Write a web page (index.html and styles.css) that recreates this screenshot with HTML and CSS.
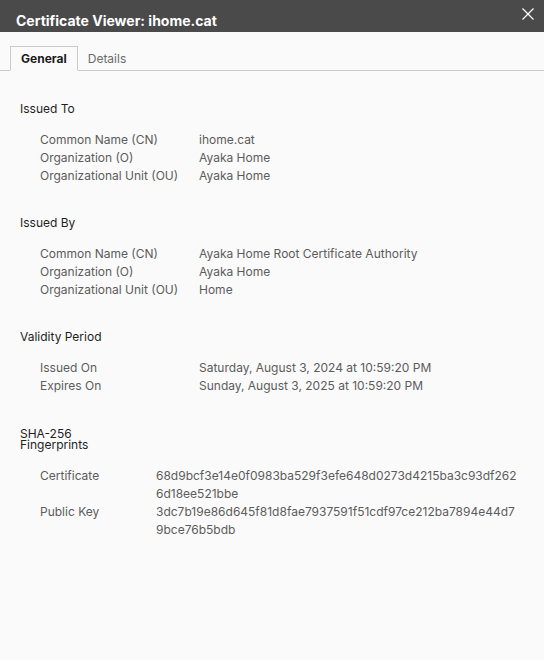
FILE: index.html
```html
<!DOCTYPE html>
<html>
<head>
<meta charset="utf-8">
<link rel="stylesheet" href="styles.css">
</head>
<body>
<div class="titlebar">
  <div class="title">Certificate Viewer: ihome.cat</div>
  <svg class="close" width="12" height="12" viewBox="0 0 12 12"><path d="M0.5 0.5 L11.5 11.5 M11.5 0.5 L0.5 11.5" stroke="#fff" stroke-width="1.2" fill="none"/></svg>
</div>
<div class="tabs">
  <div class="tab active">General</div>
  <div class="tab">Details</div>
</div>
<div class="content">
  <section class="section">
    <div class="heading">Issued To</div>
    <div class="rows">
      <div class="label">Common Name (CN)</div><div class="value">ihome.cat</div>
      <div class="label">Organization (O)</div><div class="value">Ayaka Home</div>
      <div class="label">Organizational Unit (OU)</div><div class="value">Ayaka Home</div>
    </div>
  </section>
  <section class="section">
    <div class="heading">Issued By</div>
    <div class="rows">
      <div class="label">Common Name (CN)</div><div class="value">Ayaka Home Root Certificate Authority</div>
      <div class="label">Organization (O)</div><div class="value">Ayaka Home</div>
      <div class="label">Organizational Unit (OU)</div><div class="value">Home</div>
    </div>
  </section>
  <section class="section">
    <div class="heading">Validity Period</div>
    <div class="rows">
      <div class="label">Issued On</div><div class="value">Saturday, August 3, 2024 at 10:59:20 PM</div>
      <div class="label">Expires On</div><div class="value">Sunday, August 3, 2025 at 10:59:20 PM</div>
    </div>
  </section>
  <section class="section">
    <div class="heading narrow">SHA-256 Fingerprints</div>
    <div class="rows fp">
      <div class="label">Certificate</div><div class="value hash">68d9bcf3e14e0f0983ba529f3efe648d0273d4215ba3c93df2626d18ee521bbe</div>
      <div class="label">Public Key</div><div class="value hash">3dc7b19e86d645f81d8fae7937591f51cdf97ce212ba7894e44d79bce76b5bdb</div>
    </div>
  </section>
</div>
</body>
</html>
```

FILE: styles.css
```css
html, body {
  margin: 0;
  padding: 0;
  background: #fafafa;
  font-family: Inter, "Liberation Sans", sans-serif;
  font-size: 12px;
  color: #5c5c5c;
  width: 544px;
  height: 660px;
  overflow: hidden;
}
.titlebar {
  height: 32px;
  background: #4a4a4a;
  display: flex;
  align-items: flex-end;
  justify-content: space-between;
  position: relative;
}
.title {
  color: #fff;
  font-weight: 700;
  font-size: 14px;
  padding-left: 16px;
  padding-bottom: 2px;
  line-height: 18px;
}
.close {
  position: absolute;
  right: 10px;
  top: 8px;
}
.tabs {
  margin-top: 14px;
  display: flex;
  border-bottom: 1px solid #cbcbcb;
  padding-left: 10px;
  height: 24px;
}
.tab {
  padding: 0 10px;
  line-height: 25px;
  color: #6a6a6a;
}
.tab.active {
  color: #1a1a1a;
  font-weight: 700;
  border: 1px solid #cbcbcb;
  border-bottom: 1px solid #fafafa;
  line-height: 24px;
  box-sizing: border-box;
  margin-bottom: -1px;
  height: 25px;
}
.content {
  padding: 29px 20px 0 20px;
  display: flex;
  flex-direction: column;
  gap: 29px;
}
.heading {
  color: #1f1f1f;
  line-height: 18px;
  margin-bottom: 13px;
}
.heading.narrow {
  width: 60px;
  line-height: 11px;
  margin-top: 4px;
  margin-bottom: 17px;
}
.rows {
  display: grid;
  grid-template-columns: 159px 1fr;
  padding-left: 20px;
  line-height: 18px;
}
.rows.fp {
  grid-template-columns: 116px 362px;
}
.hash {
  word-break: break-all;
}
```
